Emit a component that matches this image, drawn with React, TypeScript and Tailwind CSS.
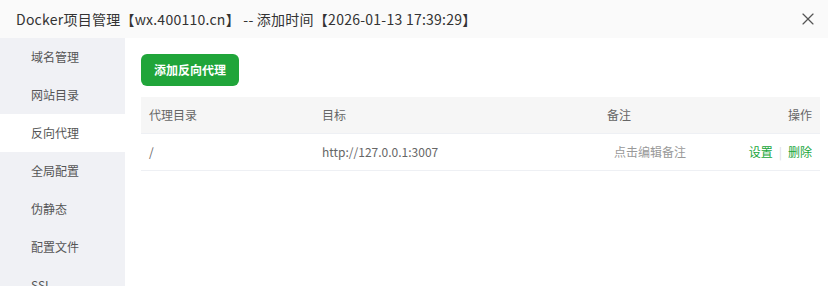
import { X } from "lucide-react";

const menu = ["域名管理", "网站目录", "反向代理", "全局配置", "伪静态", "配置文件", "SSL"];

export default function App() {
  return (
    <div className="w-[828px] h-[286px] overflow-hidden bg-white font-['Microsoft_YaHei','Noto_Sans_CJK_SC',sans-serif] text-[#333]">
      {/* title bar */}
      <div className="h-[38px] bg-[#fafafa] flex items-center justify-between pl-[16px] pr-[10px]">
        <span className="text-[14px] tracking-[0.25px] text-[#333]">
          Docker项目管理【wx.400110.cn】 -- 添加时间【2026-01-13 17:39:29】
        </span>
        <X className="w-[20px] h-[20px] text-[#555]" strokeWidth={1.4} />
      </div>

      <div className="flex h-[248px]">
        {/* left menu */}
        <div className="w-[125px] bg-[#f0f1f5] shrink-0">
          {menu.map((m) => (
            <div
              key={m}
              className={
                "h-[38px] flex items-center pl-[31px] text-[12px] text-[#555] " +
                (m === "反向代理" ? "bg-white" : "")
              }
            >
              {m}
            </div>
          ))}
        </div>

        {/* content */}
        <div className="flex-1 pl-[16px] pr-[8px] pt-[16px]">
          <button className="h-[32px] w-[98px] rounded-[6px] bg-[#20a53a] text-white text-[12px] font-bold">
            添加反向代理
          </button>

          <table className="mt-[11px] w-[679px] text-[12px] border-collapse">
            <thead>
              <tr className="h-[36px] bg-[#f6f6f6] text-[#666] border-b border-[#eef0f4]">
                <th className="text-left font-normal pl-[8px] w-[181px]">代理目录</th>
                <th className="text-left font-normal pl-0 w-[285px]">目标</th>
                <th className="text-left font-normal pl-0">备注</th>
                <th className="text-right font-normal pr-[8px]">操作</th>
              </tr>
            </thead>
            <tbody>
              <tr className="h-[37px] border-b border-[#eef0f4]">
                <td className="pl-[8px] text-[#666]">/</td>
                <td className="text-[#666]">http://127.0.0.1:3007</td>
                <td className="pl-[7px] text-[#999]">点击编辑备注</td>
                <td className="text-right pr-[8px]">
                  <span className="text-[#20a53a]">设置</span>
                  <span className="text-[#ddd] mx-[6px]">|</span>
                  <span className="text-[#20a53a]">删除</span>
                </td>
              </tr>
            </tbody>
          </table>
        </div>
      </div>
    </div>
  );
}
